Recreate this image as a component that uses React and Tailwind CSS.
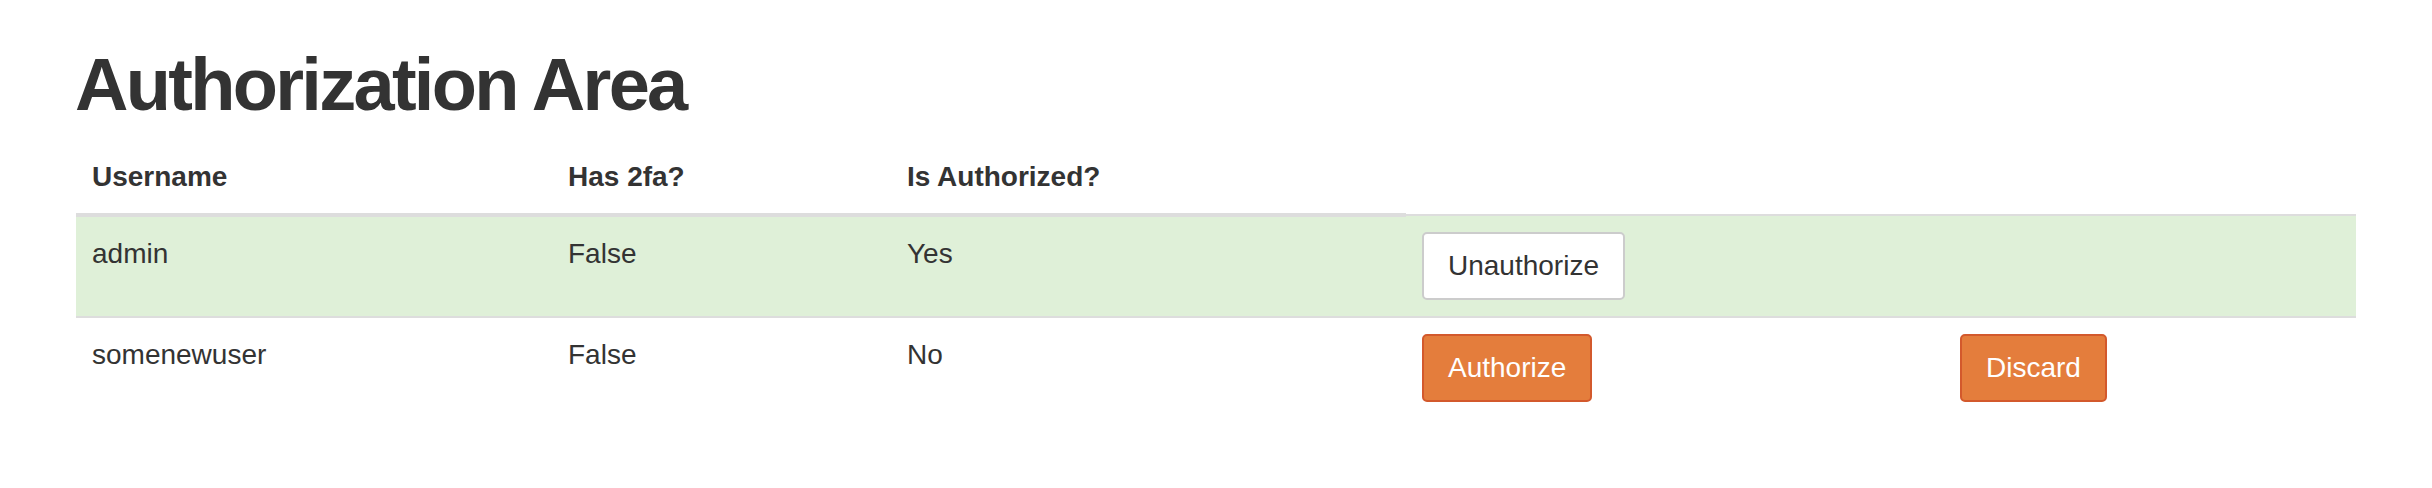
import React from "react";

const rows = [
  { user: "admin", twofa: "False", auth: "Yes", ok: true },
  { user: "somenewuser", twofa: "False", auth: "No", ok: false },
];

export default function App() {
  return (
    <div className="w-[2432px] h-[488px] bg-white text-[#333] font-['Liberation_Sans',Arial,Helvetica,sans-serif] px-[76px] pt-[45px]">
      <h1 className="h-[80px] -ml-[1px] text-[74px] leading-[80px] font-bold tracking-[-2.7px] m-0">
        Authorization Area
      </h1>
      <table className="mt-[16px] w-[2280px] table-fixed border-collapse text-[28px] leading-[40px]">
        <colgroup>
          <col className="w-[476px]" />
          <col className="w-[339px]" />
          <col className="w-[515px]" />
          <col className="w-[538px]" />
          <col className="w-[412px]" />
        </colgroup>
        <thead>
          <tr>
            <th className="text-left font-bold align-bottom p-[16px] border-b-4 border-[#ddd]">Username</th>
            <th className="text-left font-bold align-bottom p-[16px] border-b-4 border-[#ddd]">Has 2fa?</th>
            <th className="text-left font-bold align-bottom p-[16px] border-b-4 border-[#ddd]">Is Authorized?</th>
          </tr>
        </thead>
        <tbody>
          {rows.map((r) => (
            <tr key={r.user} className={r.ok ? "bg-[#dff0d8]" : ""}>
              <td className="align-top px-[16px] pt-[17px] pb-[15px] border-t-2 border-[#ddd]">{r.user}</td>
              <td className="align-top px-[16px] pt-[17px] pb-[15px] border-t-2 border-[#ddd]">{r.twofa}</td>
              <td className="align-top px-[16px] pt-[17px] pb-[15px] border-t-2 border-[#ddd]">{r.auth}</td>
              <td className="align-top p-[16px] border-t-2 border-[#ddd]">
                {r.ok ? (
                  <button className="inline-block align-top bg-white border-2 border-[#ccc] rounded-[5px] px-[24px] py-[12px] text-[28px] leading-[40px] text-[#333]">
                    Unauthorize
                  </button>
                ) : (
                  <button className="inline-block align-top bg-[#e47d3c] border-2 border-[#d3592c] rounded-[5px] px-[24px] py-[12px] text-[28px] leading-[40px] text-white">
                    Authorize
                  </button>
                )}
              </td>
              <td className="align-top p-[16px] border-t-2 border-[#ddd]">
                {!r.ok && (
                  <button className="inline-block align-top bg-[#e47d3c] border-2 border-[#d3592c] rounded-[5px] px-[24px] py-[12px] text-[28px] leading-[40px] text-white">
                    Discard
                  </button>
                )}
              </td>
            </tr>
          ))}
        </tbody>
      </table>
    </div>
  );
}
